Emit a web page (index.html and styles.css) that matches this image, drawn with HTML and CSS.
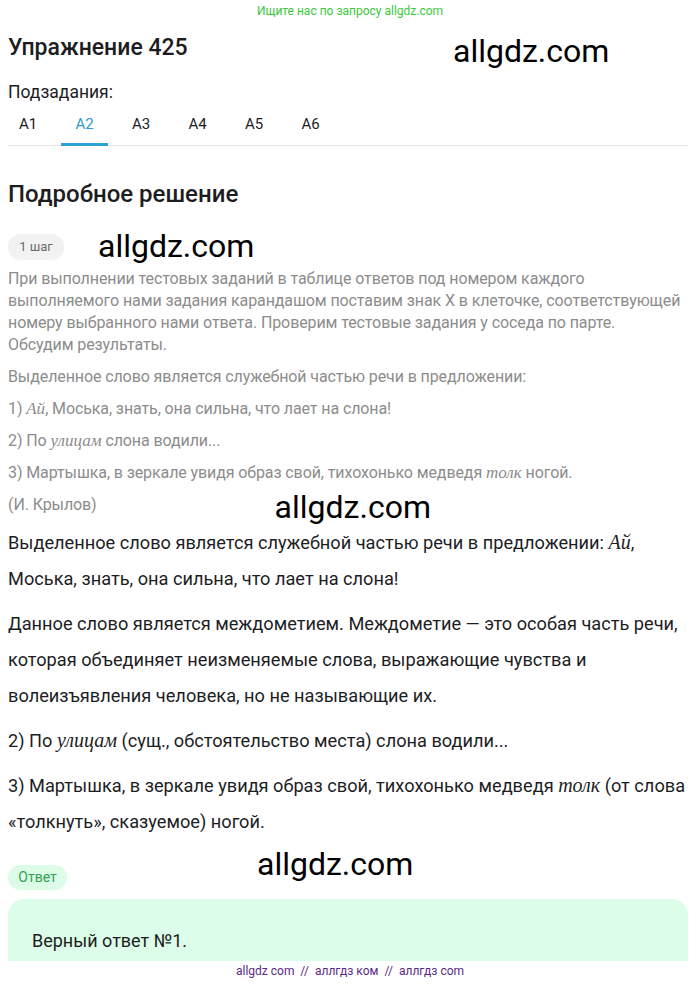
FILE: index.html
```html
<!DOCTYPE html>
<html lang="ru">
<head>
<meta charset="utf-8">
<link rel="stylesheet" href="styles.css">
</head>
<body>
<div class="top-banner">Ищите нас по запросу allgdz.com</div>
<div class="page">
  <div class="title-row">
    <h1 class="title">Упражнение 425</h1>
    <span class="wm wm-title">allgdz.com</span>
  </div>
  <div class="sub-label">Подзадания:</div>
  <div class="tabs">
    <span class="tab">А1</span>
    <span class="tab active">А2</span>
    <span class="tab">А3</span>
    <span class="tab">А4</span>
    <span class="tab">А5</span>
    <span class="tab">А6</span>
  </div>
  <h2 class="section">Подробное решение</h2>
  <div class="step-row">
    <span class="pill pill-gray">1 шаг</span>
    <span class="wm wm-step">allgdz.com</span>
  </div>
  <div class="muted">
    <p>При выполнении тестовых заданий в таблице ответов под номером каждого выполняемого нами задания карандашом поставим знак X в клеточке, соответствующей номеру выбранного нами ответа. Проверим тестовые задания у соседа по парте.<br>Обсудим результаты.</p>
    <p>Выделенное слово является служебной частью речи в предложении:</p>
    <p>1) <i class="m">Ай</i>, Моська, знать, она сильна, что лает на слона!</p>
    <p>2) По <i class="m">улицам</i> слона водили...</p>
    <p>3) Мартышка, в зеркале увидя образ свой, тихохонько медведя <i class="m">толк</i> ногой.</p>
    <p class="author-row"><span>(И. Крылов)</span><span class="wm wm-mid">allgdz.com</span></p>
  </div>
  <div class="main">
    <p>Выделенное слово является служебной частью речи в предложении: <i class="m">Ай</i>, Моська, знать, она сильна, что лает на слона!</p>
    <p>Данное слово является междометием. Междометие — это особая часть речи, которая объединяет неизменяемые слова, выражающие чувства и волеизъявления человека, но не называющие их.</p>
    <p>2) По <i class="m">улицам</i> (сущ., обстоятельство места) слона водили...</p>
    <p>3) Мартышка, в зеркале увидя образ свой, тихохонько медведя <i class="m">толк</i> (от слова «толкнуть», сказуемое) ногой.</p>
  </div>
  <div class="answer-row">
    <span class="pill pill-green">Ответ</span>
    <span class="wm wm-answer">allgdz.com</span>
  </div>
  <div class="answer-box">Верный ответ №1.</div>
</div>
<div class="footer">allgdz com &nbsp;//&nbsp; аллгдз ком &nbsp;//&nbsp; аллгдз com</div>
</body>
</html>
```
FILE: styles.css
```css
* { box-sizing: border-box; }
body {
  margin: 0;
  font-family: Roboto, "Liberation Sans", sans-serif;
  color: #1d1d1f;
  background: #fff;
}
.top-banner {
  text-align: center;
  color: #3cc83c;
  font-size: 12px;
  line-height: 14px;
  padding-top: 4px;
}
.page {
  padding: 0 12px 0 8px;
}
.title-row {
  display: flex;
  align-items: center;
  height: 40px;
  margin-top: 9px;
}
.title {
  margin: 0;
  font-size: 23px;
  font-weight: 500;
  width: 445px;
  flex: none;
}
.wm {
  font-family: Roboto, "Liberation Sans", sans-serif;
  color: #000;
  font-size: 32px;
  font-weight: 400;
  line-height: 36px;
  white-space: nowrap;
  letter-spacing: 0;
}
.wm-title { margin-top: 8px; }
.sub-label {
  font-size: 17.5px;
  margin-top: 15px;
  line-height: 20px;
}
.tabs {
  display: flex;
  border-bottom: 1px solid #e6e6e6;
  margin-top: 8px;
}
.tab {
  flex: none;
  width: 47px;
  text-align: center;
  font-size: 15px;
  padding: 5px 0 10px;
  margin-right: 9.5px;
  border-bottom: 3px solid transparent;
  margin-bottom: -1px;
}
.tab:first-child { margin-left: -3.5px; }
.tab.active {
  color: #2f9bd0;
  border-bottom-color: #2aa3d4;
}
.section {
  margin: 35px 0 0;
  font-size: 24px;
  font-weight: 500;
  line-height: 26px;
}
.step-row {
  display: flex;
  align-items: center;
  margin-top: 23px;
}
.pill {
  display: inline-block;
  border-radius: 14px;
  font-size: 13px;
  line-height: 26px;
  padding: 0 9px;
  flex: none;
}
.pill-gray {
  background: #f2f2f2;
  color: #6b6b6b;
  width: 56px;
  text-align: center;
}
.wm-step { margin-left: 34px; margin-top: -2px; }
.muted {
  color: #8c8c8c;
  font-size: 16px;
  line-height: 22px;
  margin-top: 4px;
  letter-spacing: -0.1px;
}
.muted p { margin: 0 0 10px; }
.m {
  font-family: "Liberation Serif", serif;
  font-size: 17px;
  font-style: italic;
  letter-spacing: 0;
}
.author-row {
  display: flex;
  align-items: center;
  height: 22px;
}
.wm-mid { margin-left: 178px; margin-top: 4px; }
.main {
  font-size: 18.2px;
  line-height: 36px;
  color: #1d1d1f;
  margin-top: -1px;
}
.main p { margin: 0 0 9px; }
.main .m { font-size: 20px; line-height: 20px; }
.answer-row {
  display: flex;
  align-items: center;
  margin-top: 25px;
  height: 25px;
}
.pill-green {
  background: #dcfce7;
  color: #30a150;
  font-size: 14px;
  line-height: 25px;
  width: 59px;
  text-align: center;
}
.wm-answer { margin-left: 190px; margin-top: -28px; }
.answer-box {
  background: #dcfde8;
  border-radius: 16px;
  margin-top: 9px;
  padding: 30px 24px;
  font-size: 18px;
  line-height: 24px;
  height: 100px;
}
.footer {
  position: fixed;
  left: 0;
  right: 0;
  bottom: 0;
  height: 24px;
  background: #fff;
  text-align: center;
  color: #5b2a86;
  font-size: 12px;
  line-height: 20px;
}
```
